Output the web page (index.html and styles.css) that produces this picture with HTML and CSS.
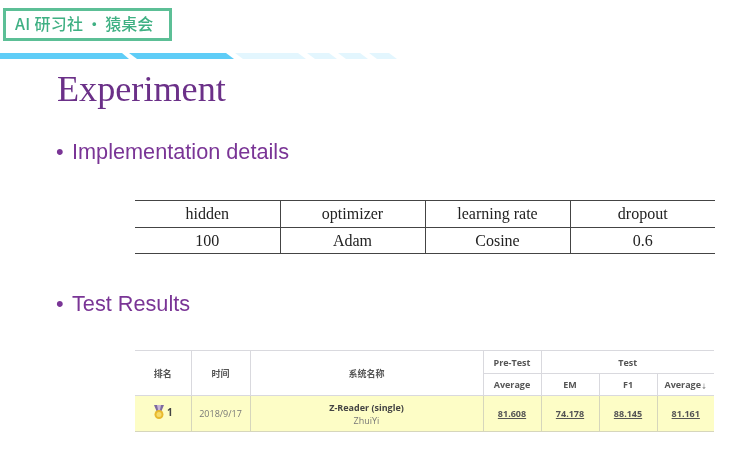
FILE: index.html
```html
<!DOCTYPE html>
<html lang="en">
<head>
<meta charset="utf-8">
<title>Experiment</title>
<link rel="stylesheet" href="styles.css">
</head>
<body>
<div class="brand"><span class="brand-a">AI 研习社</span><span>·</span><span>猿桌会</span></div>
<svg class="stripe" width="400" height="6" viewBox="0 0 400 6" aria-hidden="true">
  <polygon points="0,0 122,0 129,6 0,6" fill="#5fcdf7"/>
  <polygon points="129,0 226,0 234,6 137,6" fill="#5fcdf7"/>
  <polygon points="235,0 298,0 306,6 243,6" fill="#e3f6fe"/>
  <polygon points="307,0 329,0 337,6 315,6" fill="#e3f6fe"/>
  <polygon points="338,0 360,0 368,6 346,6" fill="#e3f6fe"/>
  <polygon points="369,0 389,0 397,6 377,6" fill="#e3f6fe"/>
</svg>
<main class="slide">
  <h1 class="title">Experiment</h1>
  <p class="bullet first">Implementation details</p>
  <table class="params">
    <tr><td>hidden</td><td>optimizer</td><td>learning rate</td><td>dropout</td></tr>
    <tr><td>100</td><td>Adam</td><td>Cosine</td><td>0.6</td></tr>
  </table>
  <p class="bullet second">Test Results</p>
  <table class="board">
    <colgroup>
      <col class="c-rank"><col class="c-time"><col class="c-name"><col class="c-num"><col class="c-num"><col class="c-num"><col class="c-last">
    </colgroup>
    <tr class="h1">
      <th rowspan="2">排名</th><th rowspan="2">时间</th><th rowspan="2">系统名称</th><th>Pre-Test</th><th colspan="3">Test</th>
    </tr>
    <tr class="h2"><th>Average</th><th>EM</th><th>F1</th><th>Average<span class="arrow">↓</span></th></tr>
    <tr class="result">
      <td class="rank"><span class="rank-in"><svg width="12" height="16" viewBox="0 0 12 16" aria-hidden="true">
        <path d="M1 1h10l-2.500 6h-5z" fill="#7d6a9e"/><path d="M4 1h4l-1 5h-2z" fill="#c9b7d8"/>
        <circle cx="6" cy="10.500" r="4.500" fill="#e8b92e"/><circle cx="6" cy="10.500" r="2.500" fill="#f6dc6a"/>
      </svg><b>1</b></span></td>
      <td class="date">2018/9/17</td>
      <td class="sys"><b>Z-Reader (single)</b><span>ZhuiYi</span></td>
      <td class="score"><u>81.608</u></td><td class="score"><u>74.178</u></td><td class="score"><u>88.145</u></td><td class="score"><u>81.161</u></td>
    </tr>
  </table>
</main>
</body>
</html>
```
FILE: styles.css
```css
* { box-sizing: border-box; }
html, body { margin: 0; padding: 0; }
body {
  width: 740px;
  height: 449px;
  overflow: hidden;
  background: #fff;
  padding-top: 8px;
  filter: blur(0.35px);
}
.brand {
  display: flex;
  gap: 3px;
  width: 169px;
  height: 33px;
  margin-left: 3px;
  border: 3px solid #5cbf96;
  padding-left: 9px;
  font: 500 16px/25px "Noto Sans CJK SC", sans-serif;
  color: #3fb083;
  white-space: nowrap;
}
.brand-a { letter-spacing: 0.3px; }
.stripe { display: block; margin-top: 12px; }
.slide { padding-left: 57px; }
.title {
  margin: 7px 0 0;
  font: 400 36.200px/46px "Liberation Serif", serif;
  color: #6b3088;
}
.bullet {
  margin: 0;
  font: 21.700px/26px "Liberation Sans", sans-serif;
  color: #7a3596;
  padding-left: 15px;
  position: relative;
}
.bullet::before {
  content: "•";
  position: absolute;
  left: -1px;
}
.first { margin-top: 27px; }
.second { margin-top: 37px; }
.params {
  margin: 35px 0 0 78px;
  width: 580px;
  height: 54px;
  border-collapse: collapse;
  table-layout: fixed;
  font: 16px "Liberation Serif", serif;
  color: #222;
  text-align: center;
}
.params td {
  padding: 1px 0 0;
  height: 26.500px;
  border-top: 1px solid #444;
  border-bottom: 1px solid #444;
  border-left: 1px solid #444;
}
.params td:first-child { border-left: 0; }
.board {
  margin: 33px 0 0 78px;
  width: 579px;
  height: 82px;
  border-collapse: collapse;
  table-layout: fixed;
  font: 9px "Open Sans", "Noto Sans CJK SC", sans-serif;
  color: #444;
  text-align: center;
}
.c-rank { width: 56px; }
.c-time { width: 59px; }
.c-name { width: 233px; }
.c-num { width: 58px; }
.c-last { width: 57px; }
.board th, .board td {
  padding: 0;
  border: 1px solid #d9d9de;
}
.board th:first-child, .board td:first-child { border-left: 0; }
.board th:last-child, .board td:last-child { border-right: 0; }
.board th { font-weight: 700; color: #555; padding-top: 1px; }
.arrow { font-size: 6px; font-weight: 400; }
.h1 th, .h2 th { height: 22.500px; }
.result td {
  height: 36px;
  background: #fdfdc6;
  border-color: #d6d6bc;
}
.rank-in {
  display: inline-flex;
  align-items: center;
  gap: 2px;
  font-size: 10px;
}
.date { color: #777; }
.sys b { display: block; color: #444; }
.sys span { display: block; color: #777; }
.score { font-weight: 700; color: #555; }
```
